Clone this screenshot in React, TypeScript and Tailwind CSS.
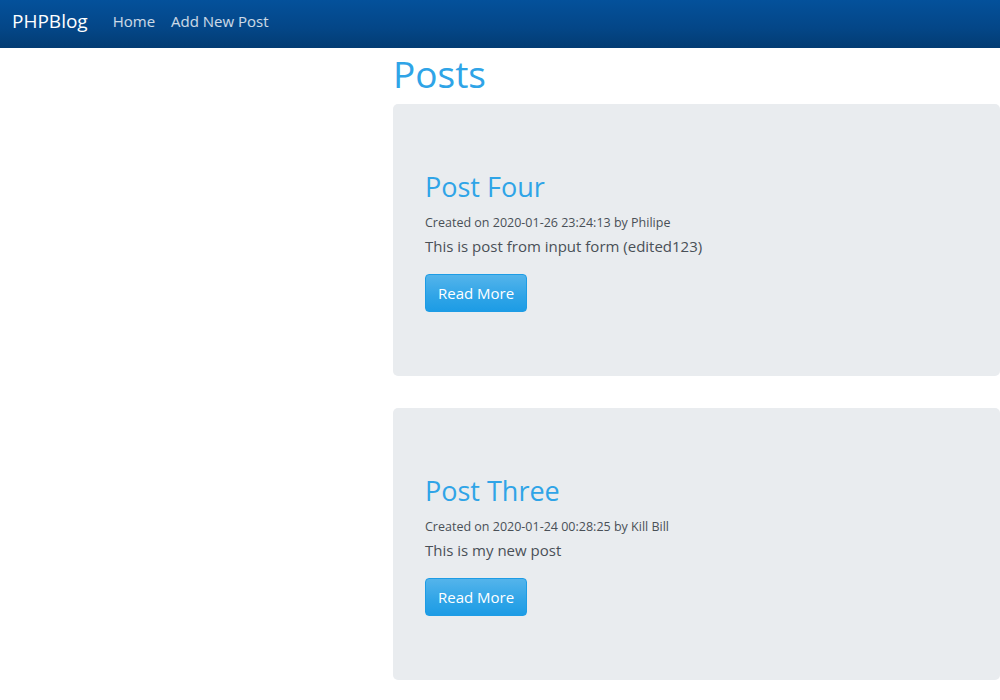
import React from "react";

const posts = [
  {
    title: "Post Four",
    created: "2020-01-26 23:24:13",
    author: "Philipe",
    body: "This is post from input form (edited123)",
  },
  {
    title: "Post Three",
    created: "2020-01-24 00:28:25",
    author: "Kill Bill",
    body: "This is my new post",
  },
];

const font = { fontFamily: "'Segoe UI', 'Open Sans', 'Liberation Sans', sans-serif" };

const App = () => {
  return (
    <div className="min-h-screen bg-white text-[#495057]" style={font}>
      <nav className="h-12 flex items-center px-3 pb-[5px] bg-[linear-gradient(#04519b,#044687_60%,#033c73)]">
        <a href="#" className="text-[19px] text-white mr-[25px]">
          PHPBlog
        </a>
        <div className="flex items-center gap-4 text-[15px] text-white/80">
          <a href="#">Home</a>
          <a href="#">Add New Post</a>
        </div>
      </nav>

      <main className="ml-[393px]">
        <h1 className="text-[37px] leading-[44px] pt-[4px] text-[#2fa4e7] mb-2">Posts</h1>
        {posts.map((post) => (
          <div key={post.title} className="bg-[#e9ecef] rounded-[5px] px-8 pt-16 pb-16 mb-8">
            <h2 className="text-[27px] leading-[38px] text-[#2fa4e7] mb-2">{post.title}</h2>
            <small className="block text-[12.5px] leading-[18px] text-[#495057] mb-[2px]">
              Created on {post.created} by {post.author}
            </small>
            <p className="text-[15px] leading-6 mb-4">{post.body}</p>
            <a
              href="#"
              className="inline-block text-white text-[15px] leading-6 px-3 py-[6px] rounded-[4px] border border-[#1d9ce5] bg-[linear-gradient(#54b4eb,#2fa4e7_60%,#1d9ce5)]"
            >
              Read More
            </a>
          </div>
        ))}
      </main>
    </div>
  );
};

export default App;
